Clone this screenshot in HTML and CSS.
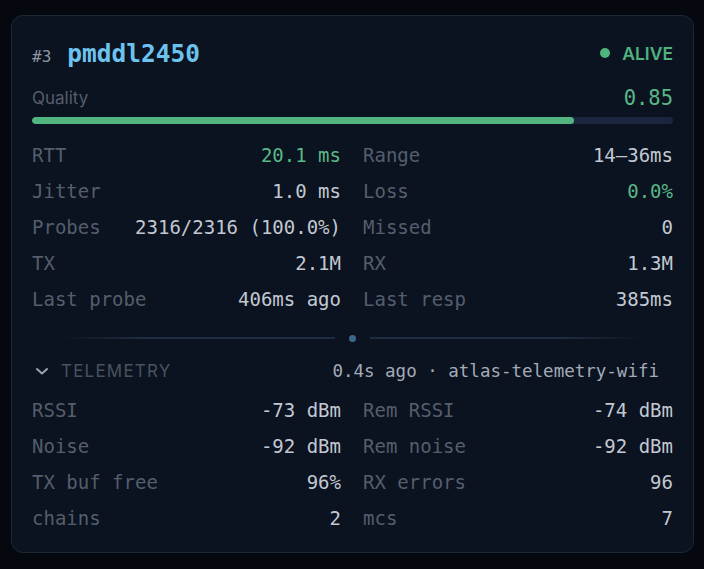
FILE: index.html
```html
<!DOCTYPE html>
<html>
<head>
<meta charset="utf-8">
<link rel="stylesheet" href="styles.css">
</head>
<body>
<div class="card">
  <div class="header">
    <div class="title"><span class="idx">#3</span><span class="name">pmddl2450</span></div>
    <div class="status"><span class="dot"></span>ALIVE</div>
  </div>
  <div class="quality">
    <span class="qlabel">Quality</span>
    <span class="qval">0.85</span>
  </div>
  <div class="bar"><div class="fill" style="width:84.6%"></div></div>
  <div class="grid">
    <div class="row"><span class="k">RTT</span><span class="v green">20.1 ms</span></div>
    <div class="row"><span class="k">Range</span><span class="v">14–36ms</span></div>
    <div class="row"><span class="k">Jitter</span><span class="v">1.0 ms</span></div>
    <div class="row"><span class="k">Loss</span><span class="v green">0.0%</span></div>
    <div class="row"><span class="k">Probes</span><span class="v">2316/2316 (100.0%)</span></div>
    <div class="row"><span class="k">Missed</span><span class="v">0</span></div>
    <div class="row"><span class="k">TX</span><span class="v">2.1M</span></div>
    <div class="row"><span class="k">RX</span><span class="v">1.3M</span></div>
    <div class="row"><span class="k">Last probe</span><span class="v">406ms ago</span></div>
    <div class="row"><span class="k">Last resp</span><span class="v">385ms</span></div>
  </div>
  <div class="divider"><span class="line left"></span><span class="ddot"></span><span class="line right"></span></div>
  <div class="telhead">
    <div class="tleft">
      <svg class="chev" width="14" height="9" viewBox="0 0 14 9"><path d="M2 2 L7 6.5 L12 2" fill="none" stroke="#9aa3b0" stroke-width="2" stroke-linecap="round" stroke-linejoin="round"/></svg>
      <span class="tlabel">TELEMETRY</span>
    </div>
    <span class="tmeta">0.4s ago · atlas-telemetry-wifi</span>
  </div>
  <div class="grid tel">
    <div class="row"><span class="k">RSSI</span><span class="v">-73 dBm</span></div>
    <div class="row"><span class="k">Rem RSSI</span><span class="v">-74 dBm</span></div>
    <div class="row"><span class="k">Noise</span><span class="v">-92 dBm</span></div>
    <div class="row"><span class="k">Rem noise</span><span class="v">-92 dBm</span></div>
    <div class="row"><span class="k">TX buf free</span><span class="v">96%</span></div>
    <div class="row"><span class="k">RX errors</span><span class="v">96</span></div>
    <div class="row"><span class="k">chains</span><span class="v">2</span></div>
    <div class="row"><span class="k">mcs</span><span class="v">7</span></div>
  </div>
</div>
</body>
</html>
```
FILE: styles.css
```css
html, body {
  margin: 0;
  padding: 0;
  background: #05080f;
}
body {
  width: 704px;
  height: 569px;
  overflow: hidden;
}
.card {
  box-sizing: border-box;
  margin: 15px 0 0 11px;
  width: 683px;
  height: 538px;
  background: #0b1220;
  border: 1px solid #1d2836;
  border-radius: 12px;
  padding: 20px 20px 16px 20px;
  font-family: "DejaVu Sans Mono", monospace;
}
.header {
  display: flex;
  justify-content: space-between;
  align-items: center;
  height: 34px;
}
.title {
  display: flex;
  align-items: baseline;
  gap: 16px;
}
.idx {
  font-size: 16px;
  color: #8e97a4;
}
.name {
  font-size: 24.5px;
  font-weight: bold;
  color: #6cc3ee;
}
.status {
  display: flex;
  align-items: center;
  gap: 12px;
  font-family: Inter, "Noto Sans", sans-serif;
  font-weight: 600;
  font-size: 17.5px;
  color: #4fb37e;
}
.dot {
  width: 10px;
  height: 10px;
  border-radius: 50%;
  background: #4fb37e;
}
.quality {
  display: flex;
  justify-content: space-between;
  align-items: center;
  height: 24px;
  margin-top: 16px;
}
.qlabel {
  font-family: Inter, "Noto Sans", sans-serif;
  font-size: 17px;
  color: #545e6b;
}
.qval {
  font-size: 20.5px;
  color: #58b886;
}
.bar {
  margin-top: 7px;
  height: 7px;
  border-radius: 4px;
  background: #1c2540;
  overflow: hidden;
}
.fill {
  height: 100%;
  border-radius: 4px;
  background: #52b57f;
}
.grid {
  display: grid;
  grid-template-columns: 309px 310px;
  column-gap: 22px;
  margin-top: 13px;
}
.row {
  display: flex;
  justify-content: space-between;
  align-items: center;
  height: 36px;
  font-size: 19px;
}
.k {
  color: #545e6c;
}
.v {
  color: #c2c8d1;
}
.v.green {
  color: #58b886;
}
.divider {
  display: flex;
  align-items: center;
  justify-content: center;
  gap: 14px;
  height: 6px;
  margin-top: 18px;
}
.line {
  width: 276px;
  height: 2px;
}
.line.left {
  background: linear-gradient(to right, rgba(30,44,62,0), #1f2d40 30%, #1f2d40);
}
.line.right {
  background: linear-gradient(to left, rgba(30,44,62,0), #1f2d40 30%, #1f2d40);
}
.ddot {
  width: 7px;
  height: 7px;
  border-radius: 50%;
  background: #3a6889;
}
.telhead {
  display: flex;
  justify-content: space-between;
  align-items: center;
  height: 28px;
  margin-top: 16px;
  padding: 0 14px 0 3px;
}
.tleft {
  display: flex;
  align-items: center;
  gap: 12px;
}
.chev {
  display: block;
}
.tlabel {
  font-family: Inter, "Noto Sans", sans-serif;
  font-size: 17px;
  letter-spacing: 1.2px;
  color: #48525f;
}
.tmeta {
  font-size: 17.5px;
  color: #a3abb7;
}
.grid.tel {
  margin-top: 7px;
}
```
